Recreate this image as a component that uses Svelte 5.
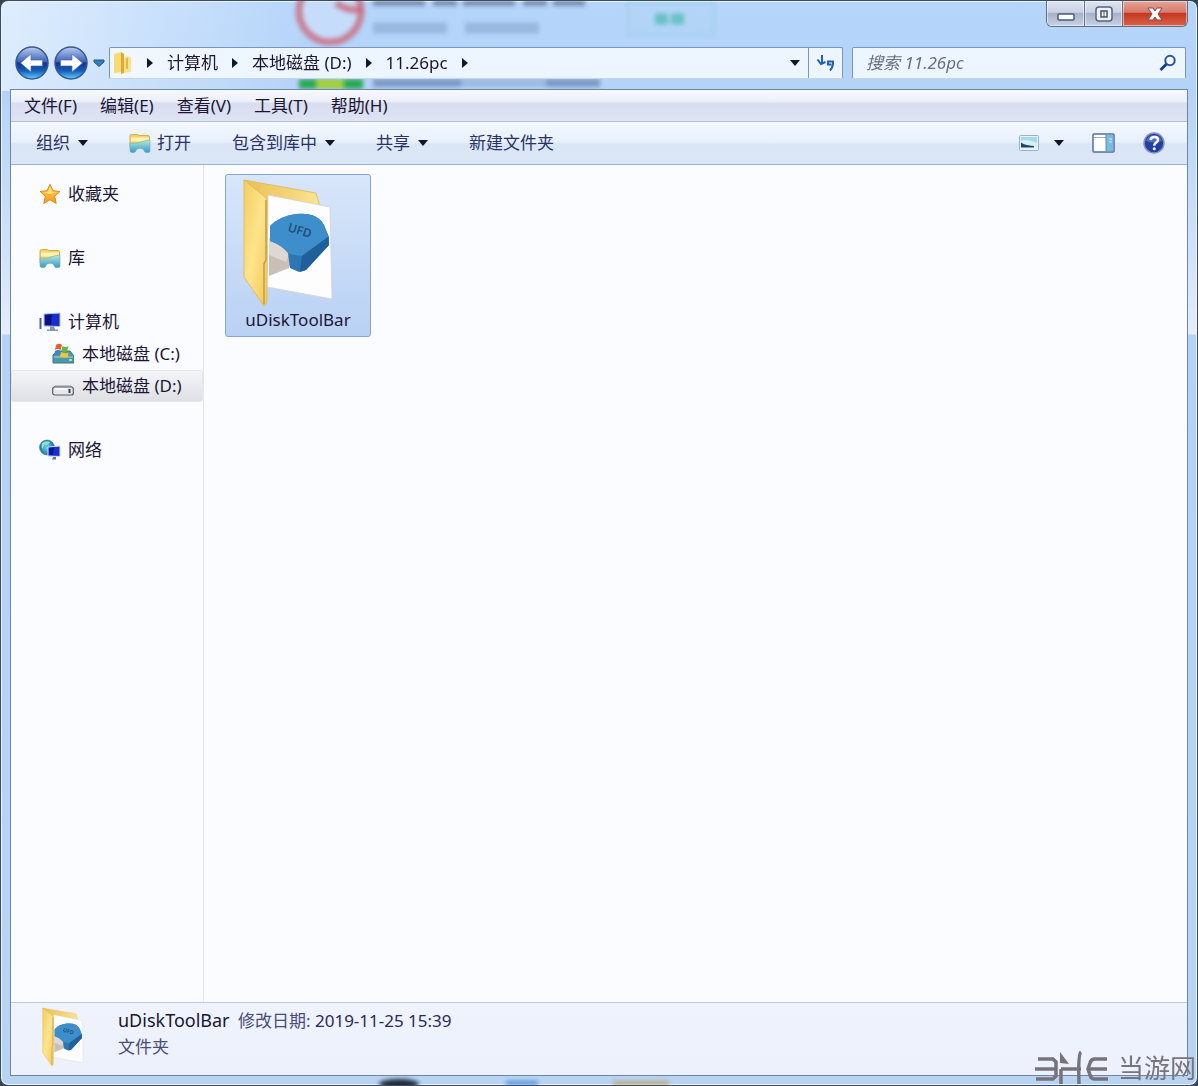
<script>
  /**
   * 资源管理器窗口
   */
  const crumbs = ["计算机", "本地磁盘 (D:)", "11.26pc"];
  const menus = ["文件(F)", "编辑(E)", "查看(V)", "工具(T)", "帮助(H)"];

  const tools = [
    { label: "组织", arrow: true },
    { label: "打开", icon: "library" },
    { label: "包含到库中", arrow: true },
    { label: "共享", arrow: true },
    { label: "新建文件夹" },
  ];

  const groups = [
    [{ id: "fav", label: "收藏夹", icon: "star" }],
    [{ id: "lib", label: "库", icon: "library" }],
    [
      { id: "pc", label: "计算机", icon: "computer" },
      { id: "c", label: "本地磁盘 (C:)", icon: "system", child: true },
      { id: "d", label: "本地磁盘 (D:)", icon: "drive", child: true },
    ],
    [{ id: "net", label: "网络", icon: "network" }],
  ];

  let current = $state("d");
  let keyword = $state("");
</script>

{#snippet down()}
  <svg class="down" viewBox="0 0 10 6" aria-hidden="true"><path d="M0 0h10L5 6z" /></svg>
{/snippet}

{#snippet right()}
  <svg class="right" viewBox="0 0 6 10" aria-hidden="true"><path d="M0 0l6 5-6 5z" /></svg>
{/snippet}

{#snippet icon(name)}
  <svg class="icon" viewBox="0 0 22 22" aria-hidden="true">
    {#if name === "star"}
      <path d="M11 1.2l2.9 6.5 7 .8-5.2 4.8 1.5 7.1-6.2-3.6-6.2 3.6 1.5-7.1L1.1 8.5l7-.8z" fill="url(#gold)" stroke="#d98a1c" stroke-linejoin="round" />
      <path d="M11 4l2 4.7 4.5.6-6.5 1.7-6.5-1.7L9 8.7z" fill="#ffe98a" opacity=".8" />
    {:else if name === "library"}
      <path d="M1 4q0-1.500 1.500-1.500h6l1.500 1h9q1.500 0 1.500 1.500v11H1z" fill="#f3d36b" stroke="#d6b04b" />
      <path d="M2 5.500h18v4H2z" fill="#fff3b0" />
      <path d="M1 11q6 1 11-1 5-2 9-2v11q0 1.500-1.500 1.500H17q-1.500 0-2-2-1-2.500-4-2.500t-4 2.500q-.5 2-2 2H2.500Q1 20.500 1 18.500z" fill="url(#teal)" stroke="#6fa9b5" stroke-width=".6" />
    {:else if name === "computer"}
      <path d="M1.500 7v11" stroke="#56608f" stroke-width="2" />
      <path d="M5 3l16-1v13.500L5 15z" fill="#1a2ccb" stroke="#b9c3dc" />
      <path d="M6 4l7-.4-1 10.400H6z" fill="#071583" />
      <path d="M11 15.500h4l1 3h3v1.500H8v-1.500h3z" fill="#8d94ab" />
    {:else if name === "system"}
      <path d="M1 12l4-4h13l4 5v7H1z" fill="#4e98a5" stroke="#38798a" />
      <path d="M2 14h19" stroke="#a9d8d8" />
      <path d="M4 2q3-2.500 6 0l-1.500 5q-3-2-5.500 0z" fill="#e3622b" />
      <path d="M10.500 3q3 2 6 0L15 8.500q-3 1.500-5.500-.5z" fill="#69b544" />
      <path d="M3 8q3-2 5.500 0L7 12.500q-3-1.500-5 0z" fill="#3d83d2" />
      <path d="M9.300 9q3 2 7.200.5L16 14q-4 1-8.200-.5z" fill="#f2c62e" />
      <path d="M17 17h3" stroke="#d4ff7a" stroke-width="1.500" />
    {:else if name === "drive"}
      <path d="M3 11h16l2.500 3H.7z" fill="#e9ebf0" stroke="#9298a4" />
      <rect x=".7" y="12" width="20.600" height="8" rx="2" fill="#e6e8ee" stroke="#555a66" stroke-width="1.200" />
      <path d="M3 14h12" stroke="#fff" stroke-width="1.500" />
      <path d="M17.500 14v4" stroke="#3a414c" stroke-width="2" />
    {:else if name === "network"}
      <circle cx="8" cy="8.500" r="7.500" fill="url(#globe)" stroke="#3a7d9c" stroke-width=".6" />
      <path d="M3 4q4-3 8-1-1 3-4 3t-3 4q-2-1-1-6z" fill="#8de1d1" />
      <path d="M9 8l12-1v10.500L9 17z" fill="#1931cc" stroke="#d5dcef" />
      <path d="M10 9l5-.4-1 7.400h-4z" fill="#0b1b96" />
      <path d="M14 18h3v2.500h-4z" fill="#6e7795" />
    {/if}
  </svg>
{/snippet}

{#snippet folder()}
  <svg class="folder" viewBox="0 0 92 130" aria-hidden="true">
    <path d="M2 2l72 13 3 10v80L25 100z" fill="url(#back)" stroke="#d9b75e" stroke-width=".8" />
    <path d="M26 17l62 12 2 92-65-12z" fill="#fdfdfe" stroke="#cfd3da" stroke-width=".8" />
    <path d="M27 62l24 14-4 14-20 8z" fill="#c9bfb6" />
    <path d="M27 60l22 12-5 12-17-7z" fill="#ded8d3" />
    <path d="M28 48q10-10 26-12 21-2 28 11l5 12v8L64 92l-7 2-9-4-2-15q-7-9-18-12z" fill="#2c76b4" />
    <path d="M28 48q10-10 26-12 21-2 28 11l4 12-26 19-13-2q-7-9-19-13z" fill="#3e8ecb" />
    <path d="M60 78l26-19 1 8L64 92l-6 2z" fill="#1f609b" />
    <text x="45" y="53" transform="rotate(17 45 53)" font-size="12" font-weight="600" fill="#1f4f7a">UFD</text>
    <path d="M2 2l21 17q2 2 2 5v98q0 4-3 6L2 99z" fill="url(#front)" stroke="#dfb751" stroke-width=".8" />
    <path d="M24 22v60l-2 4v40" fill="none" stroke="#c99d3c" stroke-width="1.500" />
  </svg>
{/snippet}

<svg class="defs" aria-hidden="true">
  <defs>
    <linearGradient id="gold" x2="0" y2="1"><stop stop-color="#ffd94d" /><stop offset="1" stop-color="#f79a1b" /></linearGradient>
    <linearGradient id="teal" x2="0" y2="1"><stop stop-color="#bfe6d4" /><stop offset="1" stop-color="#2c9fcf" /></linearGradient>
    <linearGradient id="front" x2="1" y2="1"><stop stop-color="#f3cd61" /><stop offset=".5" stop-color="#fde48c" /><stop offset="1" stop-color="#f1c85a" /></linearGradient>
    <linearGradient id="back"><stop stop-color="#e8bf55" /><stop offset="1" stop-color="#fde290" /></linearGradient>
    <radialGradient id="globe"><stop stop-color="#7cd2e8" /><stop offset="1" stop-color="#1b76a8" /></radialGradient>
    <linearGradient id="ball" x2="0" y2="1">
      <stop stop-color="#b9cdf0" /><stop offset=".45" stop-color="#3e66bd" /><stop offset=".5" stop-color="#0f3590" /><stop offset=".75" stop-color="#1660bd" /><stop offset="1" stop-color="#5ed2fb" />
    </linearGradient>
  </defs>
</svg>

<div class="window">
  <!-- 透过玻璃边框看到的桌面内容 -->
  <svg class="glass" width="760" height="90" aria-hidden="true">
    <g class="blur">
      <circle cx="329" cy="10" r="31" fill="#dfe9fa" fill-opacity=".4" stroke="#c96a7d" stroke-opacity=".8" stroke-width="7" />
      <path d="M335 2q10 8 27 7" fill="none" stroke="#c96a7d" stroke-width="7" opacity=".8" />
      <path d="M372 2h212" stroke="#4f6280" stroke-width="5" stroke-dasharray="52 8 24 6" opacity=".7" />
      <path d="M372 27h182" stroke="#7d9cc8" stroke-width="11" stroke-dasharray="74 18" opacity=".5" />
      <rect x="627" y="1" width="86" height="33" fill="#9fd6e8" fill-opacity=".15" stroke="#7fc9cf" stroke-opacity=".4" stroke-width="2" />
      <path d="M654 18h32" stroke="#44b5aa" stroke-width="11" stroke-dasharray="13 3" opacity=".65" />
      <path d="M298 83h64" stroke="#2aa855" stroke-width="10" />
      <path d="M315 83h28" stroke="#a5cf3c" stroke-width="9" />
      <path d="M372 82h88M545 82h54" stroke="#6886b4" stroke-width="8" opacity=".75" />
      <path d="M460 82h85" stroke="#8aa9d4" stroke-width="8" opacity=".6" />
    </g>
  </svg>
  <svg class="glass bottom" width="760" height="9" aria-hidden="true">
    <g class="blur">
      <ellipse cx="398" cy="8" rx="20" ry="5" fill="#1f2a3a" />
      <path d="M505 7h32" stroke="#4b8fd8" stroke-width="4" />
      <path d="M612 7h56" stroke="#b9a878" stroke-width="4" />
    </g>
  </svg>

  <header class="titlebar">
    <div class="controls">
      <button aria-label="最小化">
        <svg width="20" height="10" viewBox="0 0 20 10"><rect x="2" y="2" width="16" height="6" rx="1" fill="#fff" stroke="#4d5876" stroke-width="1.500" /></svg>
      </button>
      <button aria-label="最大化">
        <svg width="18" height="16" viewBox="0 0 18 16"><rect x="1" y="1" width="16" height="14" rx="3" fill="#eef1f8" stroke="#59627f" stroke-width="1.500" /><rect x="6" y="5" width="6" height="6" fill="#fff" stroke="#454e6c" stroke-width="1.500" /><path d="M9 5v6" stroke="#454e6c" /></svg>
      </button>
      <button class="close" aria-label="关闭">
        <svg width="16" height="14" viewBox="0 0 16 14"><path d="M1 1h5l2 3 2-3h5l-4 6 4 6h-5l-2-3-2 3H1l4-6z" fill="#fff" stroke="#894750" /></svg>
      </button>
    </div>
  </header>

  <nav class="navbar">
    <div class="travel">
      <button aria-label="后退">
        <svg viewBox="0 0 34 34"><circle cx="17" cy="17" r="16" fill="url(#ball)" stroke="#3c568f" stroke-width="1.500" /><path d="M5.500 17L16 8v6h11.500v6H16v6z" fill="#fff" stroke="#536ca6" stroke-width=".7" /></svg>
      </button>
      <button aria-label="前进">
        <svg viewBox="0 0 34 34"><circle cx="17" cy="17" r="16" fill="url(#ball)" stroke="#3c568f" stroke-width="1.500" /><path d="M28.500 17L18 8v6H6.500v6H18v6z" fill="#fff" stroke="#536ca6" stroke-width=".7" /></svg>
      </button>
      <button class="recent" aria-label="最近浏览的位置">
        <svg viewBox="0 0 12 8"><path d="M1 1h10v2L6 7.500 1 3z" fill="#2b7fc4" stroke="#2f5484" /></svg>
      </button>
    </div>

    <div class="address">
      <svg class="crumb-icon" viewBox="0 0 20 24" aria-hidden="true">
        <path d="M1 3l7-2v20l-6 1H1z" fill="#f8da74" />
        <path d="M8 1l3 2v19l-3 1z" fill="#e0ab35" />
        <path d="M11 7l3-2 4 1v15l-7 1z" fill="#fbe28b" />
        <path d="M14 7v11" stroke="#e6b747" stroke-width="2" />
      </svg>
      {#each crumbs as crumb}
        {@render right()}
        <a href="#top">{crumb}</a>
      {/each}
      {@render right()}
      <button class="history" aria-label="以前的位置">{@render down()}</button>
      <button class="refresh" aria-label="刷新">
        <svg width="20" height="18" viewBox="0 0 20 18"><g fill="none" stroke="#2060b8" stroke-width="2"><path d="M6 1v9M1.500 5.500L5 10l4.500-2" /><path d="M15.500 10.500h-3.500v-3h5q.5 5-3 9" /></g></svg>
      </button>
    </div>

    <label class="search">
      <input type="text" placeholder="搜索 11.26pc" aria-label="搜索" bind:value={keyword} />
      <svg width="18" height="18" viewBox="0 0 18 18" aria-hidden="true"><circle cx="11" cy="6.500" r="4.700" fill="#f4f8ff" stroke="#27569f" stroke-width="2" /><path d="M7.500 10L1.500 16" stroke="#153c83" stroke-width="2.800" /></svg>
    </label>
  </nav>

  <main class="panel">
    <div class="menubar">
      {#each menus as menu}
        <button>{menu}</button>
      {/each}
    </div>

    <div class="toolbar">
      {#each tools as tool}
        <button>
          {#if tool.icon}{@render icon(tool.icon)}{/if}
          {tool.label}
          {#if tool.arrow}{@render down()}{/if}
        </button>
      {/each}
      <div class="view-tools">
        <button class="view" aria-label="更改视图">
          <svg width="20" height="16" viewBox="0 0 20 16"><rect x=".5" y=".5" width="19" height="15" rx="1" fill="#e7f3fb" stroke="#9bb0c9" /><path d="M2 2h16v9H2z" fill="#a5d9ed" /><path d="M2 6q5-3 16 2v4H2z" fill="#d7f0f3" /><path d="M2 7.500q4 3 13 3.500v1.500H2z" fill="#184a63" /></svg>
          {@render down()}
        </button>
        <button aria-label="显示预览窗格">
          <svg width="23" height="20" viewBox="0 0 23 20"><rect x="1" y="1" width="21" height="18" rx="1" fill="#fff" stroke="#566f9b" stroke-width="1.500" /><path d="M2 4.500h12" stroke="#9db1cd" /><path d="M14 2h7v16h-7z" fill="#74bce0" /><path d="M14 1v18" stroke="#6788b1" /><path d="M17 6h3M17 9h3" stroke="#d0eefb" /></svg>
        </button>
        <button aria-label="获取帮助">
          <svg width="22" height="22" viewBox="0 0 22 22"><circle cx="11" cy="11" r="10" fill="#233fa5" stroke="#8494bd" stroke-width="1.500" /><path d="M3 9q2-6 8-6t8 6q-8 3-16 0z" fill="#718cd4" opacity=".6" /><path d="M7.500 8q.5-3 4-3t3.500 3q0 1.500-2 2.700t-1.500 3" fill="none" stroke="#fff" stroke-width="2.400" /><circle cx="11.200" cy="16.800" r="1.500" fill="#fff" /></svg>
        </button>
      </div>
    </div>

    <div class="body">
      <aside class="sidebar">
        {#each groups as group}
          <div class="group">
            {#each group as item}
              <button
                class:child={item.child}
                class:selected={current === item.id}
                onclick={() => (current = item.id)}
              >
                {@render icon(item.icon)}
                {item.label}
              </button>
            {/each}
          </div>
        {/each}
      </aside>

      <section class="files">
        <button class="file">
          {@render folder()}
          <span>uDiskToolBar</span>
        </button>
      </section>
    </div>

    <footer class="details">
      <div class="thumb">{@render folder()}</div>
      <div>
        <p><strong>uDiskToolBar</strong> <span>修改日期:</span> <time>2019-11-25 15:39</time></p>
        <p><span>文件夹</span></p>
      </div>
    </footer>
  </main>

  <div class="watermark">
    <svg width="76" height="34" viewBox="0 0 76 34" aria-hidden="true">
      <path d="M4 8h15l3 3v14l-3 3H2M1 18h21M27 18v15M27 18h20M47 1q-3 2-2 32M73 8H61q-4 0-5 4l-2 6 2 6q1 4 5 4h13M54 18h19" fill="none" stroke="#77737c" stroke-width="3.500" />
      <path d="M26 1l9 12-9-1z" fill="#77737c" />
    </svg>
    <span>当游网</span>
  </div>
</div>

<style>
  :global(body) {
    margin: 0;
    background: #39434f;
  }

  .window {
    position: relative;
    box-sizing: border-box;
    min-height: 100vh;
    display: flex;
    flex-direction: column;
    padding: 0 9px 9px;
    overflow: hidden;
    border: 1px solid #3c4b5e;
    border-radius: 8px;
    background:
      linear-gradient(100deg, rgba(240, 247, 255, 0.7), rgba(240, 247, 255, 0) 26%) top / 100% 90px no-repeat,
      linear-gradient(#b5d5fb, #b5d3f7 90px, #d0e2f8 250px, #e6edf8 333px, #b4d2f5 334px, #b9d4f3);
    box-shadow: inset 0 0 0 1px #eaf4ff;
    font-family: "Noto Sans", "Noto Sans CJK SC", sans-serif;
    font-size: 17px;
    line-height: 24px;
    color: #1b1634;
  }

  .defs {
    position: absolute;
    width: 0;
    height: 0;
  }

  .glass {
    position: absolute;
    top: 0;
    left: 0;
    pointer-events: none;
  }
  .glass.bottom {
    top: auto;
    bottom: 0;
  }
  .blur { filter: blur(2px); }

  button {
    display: flex;
    align-items: center;
    justify-content: center;
    padding: 0;
    border: none;
    background: none;
    font: inherit;
    color: inherit;
    white-space: nowrap;
    cursor: pointer;
  }

  svg { flex: none; }
  .down { width: 10px; height: 6px; }
  .right { width: 6px; height: 10px; }
  .down, .right { fill: #14142c; }
  .icon { width: 22px; height: 22px; }

  .titlebar {
    position: relative;
    height: 46px;
    display: flex;
    justify-content: flex-end;
  }

  .controls {
    display: flex;
    height: 26px;
    box-sizing: border-box;
    border: 1px solid #626c86;
    border-top: none;
    border-radius: 0 0 6px 6px;
    overflow: hidden;
  }
  .controls button {
    width: 38px;
    border-right: 1px solid #69738d;
    background: linear-gradient(#dfe6f3, #c8d1e3 45%, #a6b2cb 50%, #c7d2e6);
    box-shadow: inset 0 0 0 1px rgba(255, 255, 255, 0.5);
  }
  .controls button:first-child { padding-top: 6px; }
  .controls .close {
    width: 64px;
    border-right: none;
    background: linear-gradient(#e5a597, #d97a68 45%, #c43821 50%, #d9624a);
  }

  .navbar {
    position: relative;
    display: flex;
    align-items: center;
    gap: 9px;
    padding: 0 2px 0 5px;
    margin-bottom: 10px;
    height: 32px;
  }

  .travel {
    display: flex;
    align-items: center;
    gap: 5px;
    margin-right: -5px;
  }
  .travel button, .travel svg { width: 34px; height: 34px; }
  .travel .recent, .travel .recent svg { width: 12px; height: 8px; }

  .address, .search {
    box-sizing: border-box;
    height: 32px;
    display: flex;
    align-items: center;
    min-width: 0;
    border: 1px solid #7b94b9;
    border-bottom-color: #c3d6ee;
    border-radius: 2px;
    background: rgba(245, 249, 255, 0.88);
  }
  .address {
    flex: 1;
    gap: 14px;
    padding-left: 3px;
  }
  .address a {
    color: inherit;
    text-decoration: none;
    white-space: nowrap;
  }
  .crumb-icon { width: 20px; height: 24px; }
  .history {
    width: 26px;
    height: 30px;
    margin-left: auto;
  }
  .refresh {
    width: 34px;
    height: 30px;
    margin-left: -14px;
    border-left: 1px solid #7b94b9;
  }

  .search {
    flex: 0 1 334px;
    padding: 0 8px 0 13px;
  }
  .search input {
    flex: 1;
    min-width: 0;
    padding: 0;
    border: none;
    outline: none;
    background: none;
    font: inherit;
    font-style: italic;
    color: inherit;
  }
  .search input::placeholder {
    color: #6b6f80;
    opacity: 1;
  }

  .panel {
    position: relative;
    flex: 1;
    display: flex;
    flex-direction: column;
    border: 1px solid #6d86a8;
    background: #fbfcff;
  }

  .menubar {
    display: flex;
    gap: 23px;
    height: 31px;
    padding-left: 13px;
    border-bottom: 1px solid #b3bfd6;
    background: linear-gradient(#f8f9ff, #eceffa 38%, #d8def0 42%, #dfe3f4);
  }

  .toolbar {
    display: flex;
    gap: 41px;
    height: 42px;
    padding: 0 22px 0 25px;
    border-bottom: 1px solid #9fb2ce;
    background: linear-gradient(#f5f9ff, #e7f0fc 48%, #dae6f6 52%, #dbe7f7);
    color: #2a3264;
  }
  .toolbar button { gap: 8px; }
  .toolbar .icon { margin-right: -2px; }
  .view-tools {
    display: flex;
    gap: 28px;
    margin-left: auto;
  }
  .view-tools .view { gap: 15px; }

  .body {
    flex: 1;
    display: flex;
  }

  .sidebar {
    flex: none;
    width: 192px;
    padding-top: 13px;
    border-right: 1px solid #dfe7f3;
  }
  .group { margin-bottom: 32px; }
  .sidebar button {
    box-sizing: border-box;
    width: 100%;
    height: 32px;
    justify-content: flex-start;
    gap: 7px;
    padding-left: 27px;
    border: 1px solid transparent;
    border-radius: 3px;
  }
  .sidebar .child {
    gap: 8px;
    padding-left: 40px;
  }
  .sidebar .selected {
    border-color: #e4e5ea;
    background: linear-gradient(#f4f5f8, #dfe0e5);
  }

  .files {
    flex: 1;
    padding: 9px 21px;
  }
  .file {
    box-sizing: border-box;
    flex-direction: column;
    width: 146px;
    padding: 3px 0 4px;
    border: 1px solid #84a5cd;
    border-radius: 3px;
    background: linear-gradient(#d8e6fa, #b9d1f4);
  }
  .folder {
    display: block;
    width: 92px;
    height: 130px;
  }
  .file .folder { margin-right: 20px; }

  .details {
    display: flex;
    align-items: flex-start;
    gap: 32px;
    box-sizing: border-box;
    height: 73px;
    padding: 4px 0 0 29px;
    border-top: 1px solid #bccbe0;
    background: linear-gradient(#eff3fd, #edf1fc);
  }
  .thumb .folder { width: 46px; height: 60px; }
  .details p {
    margin: 0;
    line-height: 26px;
  }
  .details strong {
    margin-right: 4px;
    font-size: 18px;
    font-weight: 400;
  }
  .details span { color: #4a4c78; }
  .details time { color: #2a2a5a; }

  .watermark {
    position: absolute;
    right: 1px;
    bottom: 0;
    display: flex;
    align-items: center;
    gap: 8px;
    font-size: 26px;
    line-height: 34px;
    color: #77747d;
    pointer-events: none;
  }
</style>
